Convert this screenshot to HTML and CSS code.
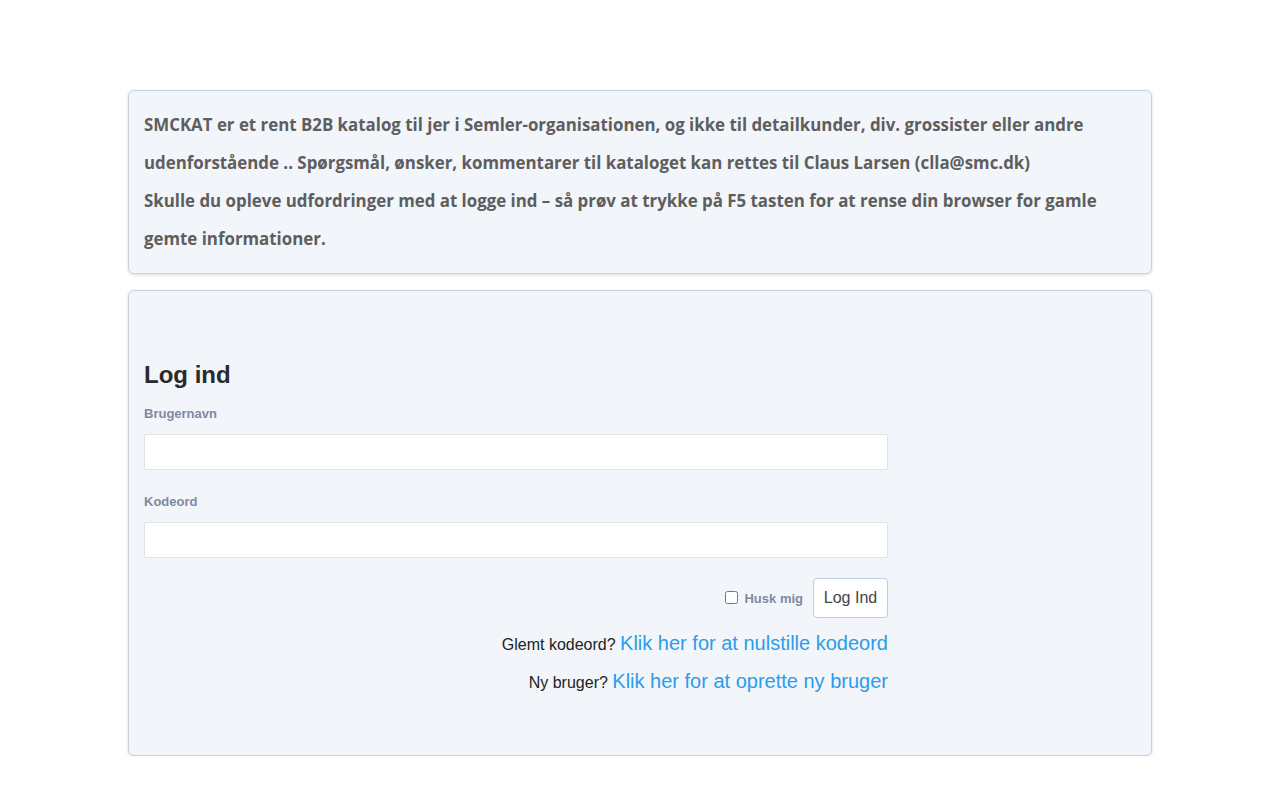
FILE: index.html
```html
<!DOCTYPE html>
<html lang="da">
<head>
<meta charset="utf-8">
<title>Log ind</title>
<link rel="stylesheet" href="styles.css">
</head>
<body>
<div class="container">
  <div class="panel info">
    <p>SMCKAT er et rent B2B katalog til jer i Semler-organisationen, og ikke til detailkunder, div. grossister eller andre udenforstående .. Spørgsmål, ønsker, kommentarer til kataloget kan rettes til Claus Larsen (clla@smc.dk)</p>
    <p>Skulle du opleve udfordringer med at logge ind – så prøv at trykke på F5 tasten for at rense din browser for gamle gemte informationer.</p>
  </div>
  <div class="panel login">
    <form class="form">
      <h2>Log ind</h2>
      <div class="group">
        <label class="lbl" for="u">Brugernavn</label>
        <input id="u" class="input" type="text">
      </div>
      <div class="group">
        <label class="lbl" for="p">Kodeord</label>
        <input id="p" class="input" type="password">
      </div>
      <div class="actions">
        <label class="remember"><input type="checkbox" class="check"> Husk mig</label>
        <button type="button" class="btn">Log Ind</button>
      </div>
      <p class="linkline">Glemt kodeord? <a href="#">Klik her for at nulstille kodeord</a></p>
      <p class="linkline">Ny bruger? <a href="#">Klik her for at oprette ny bruger</a></p>
    </form>
  </div>
</div>
</body>
</html>
```
FILE: styles.css
```css
* { box-sizing: border-box; }
html, body { margin: 0; padding: 0; background: #fff; }
body { font-family: "Liberation Sans", Arial, sans-serif; color: #222; }
.container {
  width: 1024px;
  margin: 90px auto 0;
}
.panel {
  background: #f2f5fa;
  border: 1px solid #c9d0e0;
  border-radius: 6px;
  box-shadow: 0 1px 3px rgba(100, 110, 140, 0.25);
  padding: 15px;
}
.info {
  font-family: "Open Sans", sans-serif;
  font-weight: 700;
  font-size: 16.86px;
  line-height: 38px;
  color: #5e5e5e;
  margin-bottom: 16px;
}
.info p { margin: 0; }
.login { padding: 70px 15px 53px; }
.form { width: 744px; }
.form h2 {
  margin: 0 0 16px;
  font-size: 24px;
  line-height: 28px;
  font-weight: 700;
  color: #2a2a2a;
}
.group { margin-bottom: 23px; }
.lbl {
  display: block;
  font-size: 13px;
  font-weight: 700;
  line-height: 18px;
  color: #7f89a3;
  margin-bottom: 11px;
}
.input {
  display: block;
  width: 100%;
  height: 36px;
  border: 1px solid #e1e3e6;
  border-radius: 2px;
  background: #fff;
  font-size: 14px;
  padding: 6px 10px;
}
.actions {
  display: flex;
  justify-content: flex-end;
  align-items: center;
  gap: 10px;
  margin-top: -3px;
  margin-bottom: 8px;
}
.remember {
  display: flex;
  align-items: center;
  gap: 6px;
  font-size: 13px;
  font-weight: 700;
  color: #7f89a3;
  padding-top: 1px;
}
.check { margin: 0 0 3px; width: 13px; height: 13px; }
.btn {
  height: 40px;
  width: 75px;
  border: 1px solid #c3cbe3;
  border-radius: 4px;
  background: #fff;
  font-family: "Liberation Sans", Arial, sans-serif;
  font-size: 16px;
  color: #444;
  padding: 0;
}
.linkline {
  text-align: right;
  margin: 0;
  font-size: 16px;
  line-height: 38px;
  height: 38px;
  color: #222;
}
.linkline a {
  color: #2d9cea;
  font-size: 20px;
  line-height: 20px;
  text-decoration: none;
}
```
